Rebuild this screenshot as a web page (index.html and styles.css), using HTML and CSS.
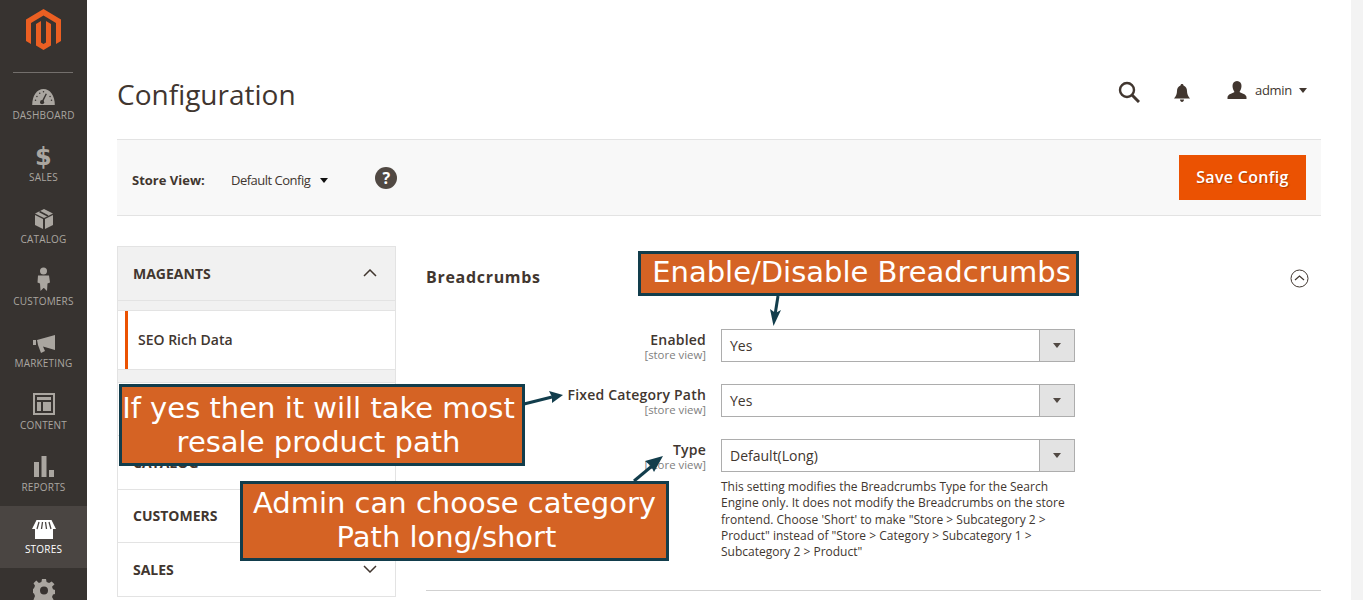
FILE: index.html
```html
<!DOCTYPE html>
<html lang="en">
<head>
<meta charset="utf-8">
<title>Configuration</title>
<link rel="stylesheet" href="styles.css">
</head>
<body>
<div class="app">
  <nav class="sidebar">
    <div class="logo">
      <svg width="36" height="42" viewBox="26 9 36 42"><path fill="#eb5f22" d="M43.500 9 61 19.500V41l-5 3V23L43.500 15.500 31 23v21l-5-3V19.500z"/><path fill="#eb5f22" d="M43.500 50 36 45.500V24l5-3v21.500l2.500 1.500 2.500-1.500V21l5 3v21.500z"/></svg>
    </div>
    <ul class="menu">
      <li class="menu-item">
        <svg class="menu-icon" width="23" height="16" viewBox="0 0 24 17"><path fill="#aaa6a0" fill-rule="evenodd" d="M0 17C0 7 5 0 12 0s12 7 12 17z"/><path stroke="#373330" stroke-width="1.500" d="M10 15 15 5"/><circle cx="10.500" cy="14" r="2.200" fill="#373330"/><g fill="#373330"><circle cx="5" cy="8" r=".8"/><circle cx="8" cy="4.500" r=".8"/><circle cx="12" cy="3" r=".8"/><circle cx="19" cy="8" r=".8"/><circle cx="20.500" cy="12" r=".8"/><circle cx="3.500" cy="12" r=".8"/></g></svg>
        <span>DASHBOARD</span>
      </li>
      <li class="menu-item">
        <span class="dollar">$</span>
        <span>SALES</span>
      </li>
      <li class="menu-item">
        <svg class="menu-icon" width="20" height="21" viewBox="0 0 20 21"><path fill="#aaa6a0" d="M10 1 19 5.500 10 10 1 5.500zM1 7l8 4v10l-8-4zM19 7v10l-8 4V11z"/><path stroke="#373330" stroke-width="1.500" d="M5.500 3.500 14 8"/></svg>
        <span>CATALOG</span>
      </li>
      <li class="menu-item">
        <svg class="menu-icon" width="13" height="24" viewBox="0 0 13 24"><circle cx="6.500" cy="4" r="3.500" fill="#aaa6a0"/><path fill="#aaa6a0" d="M1 8.500h11l1 7-2.500 1-.5 7.500-3-3-.5 0-3 3-.5-7.500-2.500-1z"/></svg>
        <span>CUSTOMERS</span>
      </li>
      <li class="menu-item">
        <svg class="menu-icon" width="22" height="18" viewBox="0 0 22 18"><path fill="#aaa6a0" d="M0 5h3v5H0zM4 5 22 0v15L10 11.500l2 4.500-4 2-3-8z"/></svg>
        <span>MARKETING</span>
      </li>
      <li class="menu-item">
        <svg class="menu-icon" width="22" height="22" viewBox="0 0 22 22"><path fill="#aaa6a0" fill-rule="evenodd" d="M0 0h22v22H0zM2 2v18h18V2z"/><path fill="#aaa6a0" d="M4 4h14v3H4zM4 9h4v9H4zM10 9h8v9h-8z"/></svg>
        <span>CONTENT</span>
      </li>
      <li class="menu-item">
        <svg class="menu-icon" width="20" height="21" viewBox="0 0 20 21"><path fill="#aaa6a0" d="M0 6h5v15H0zM7.500 0h5v21h-5zM15 14h5v7h-5z"/></svg>
        <span>REPORTS</span>
      </li>
      <li class="menu-item active">
        <svg class="menu-icon" width="24" height="19" viewBox="0 0 24 19"><path fill="#fff" d="M3 9h18v10H3zM4.500 0h15L24 9H0z"/><path stroke="#4a4542" stroke-width="1.300" d="M7 2 5 9M10.500 2 9.500 9M13.500 2 14.500 9M17 2l2 7"/></svg>
        <span>STORES</span>
      </li>
      <li class="menu-item">
        <svg class="menu-icon" width="22" height="22" viewBox="0 0 22 22"><path fill="#aaa6a0" fill-rule="evenodd" d="M9 0h4l.6 3 2.500 1 2.600-1.600 2.800 2.800L19 7.800l1 2.500 2 .7v4l-2 .6-1 2.500 1.600 2.600-2.800 2.800-2.600-1.700-2.500 1-.6 3H9l-.6-3-2.500-1-2.600 1.700-2.800-2.800L2 17.100 1 14.600 0 14v-4l1-.7 1-2.500L.5 4.200l2.800-2.800L5.900 4l2.500-1zM11 7.500a4 4 0 1 0 0 8 4 4 0 0 0 0-8z"/></svg>
      </li>
    </ul>
  </nav>

  <main class="main">
    <header class="page-head">
      <h1 class="page-title">Configuration</h1>
      <div class="head-actions">
        <svg class="search-icon" width="22" height="22" viewBox="0 0 22 22"><circle cx="9" cy="9" r="7" fill="none" stroke="#41362f" stroke-width="2.400"/><path stroke="#41362f" stroke-width="3" d="M14 14 21 21"/></svg>
        <svg class="bell-icon" width="16" height="18" viewBox="0 0 16 18"><path fill="#41362f" d="M8 0c1 0 1.500.7 1.500 1.500C12 2.500 13 4.500 13 7c0 3 1 5 3 7.500H0C2 12 3 10 3 7c0-2.500 1-4.500 3.500-5.500C6.500.7 7 0 8 0zM6 15.500h4c0 1.500-1 2.500-2 2.500s-2-1-2-2.500z"/></svg>
        <div class="user">
          <svg width="20" height="18" viewBox="0 0 20 18"><path fill="#41362f" d="M10 0c3 0 4.500 2.200 4.500 5S13 10 12.500 11c2 1.500 7 2 7 5.500V18H.5v-1.500c0-3.500 5-4 7-5.500C7 10 5.500 7.800 5.500 5S7 0 10 0z"/></svg>
          <span class="user-name">admin</span>
          <span class="caret"></span>
        </div>
      </div>
    </header>

    <section class="store-bar">
      <div class="store-scope">
        <span class="store-label">Store View:</span>
        <span class="store-value">Default Config</span>
        <span class="caret dark"></span>
        <span class="help">?</span>
      </div>
      <button class="save-btn">Save Config</button>
    </section>

    <div class="columns">
      <aside class="tabs">
        <div class="tab-head open"><span>MAGEANTS</span><svg width="14" height="8" viewBox="0 0 14 8"><path fill="none" stroke="#41362f" stroke-width="1.500" d="M1 7l6-6 6 6"/></svg></div>
        <div class="tab-open-gap"></div>
        <div class="tab-link">SEO Rich Data</div>
        <div class="tab-grey"></div>
        <div class="tab-head"></div>
        <div class="tab-head"><span>CATALOG</span></div>
        <div class="tab-head"><span>CUSTOMERS</span></div>
        <div class="tab-head"><span>SALES</span><svg width="14" height="8" viewBox="0 0 14 8"><path fill="none" stroke="#41362f" stroke-width="1.500" d="M1 1l6 6 6-6"/></svg></div>
      </aside>

      <section class="config">
        <div class="config-head">
          <h2 class="config-title">Breadcrumbs</h2>
          <svg class="collapse" width="19" height="19" viewBox="0 0 19 19"><circle cx="9.500" cy="9.500" r="8.500" fill="none" stroke="#41362f" stroke-width="1"/><path fill="none" stroke="#41362f" stroke-width="1.200" d="M5 11l4.500-4 4.500 4"/></svg>
        </div>
        <div class="form">
          <div class="row">
            <div class="label"><b>Enabled</b><small>[store view]</small></div>
            <div class="select"><span>Yes</span><i class="select-btn"><span class="caret small"></span></i></div>
          </div>
          <div class="row">
            <div class="label"><b>Fixed Category Path</b><small>[store view]</small></div>
            <div class="select"><span>Yes</span><i class="select-btn"><span class="caret small"></span></i></div>
          </div>
          <div class="row">
            <div class="label"><b>Type</b><small>[store view]</small></div>
            <div class="field">
              <div class="select"><span>Default(Long)</span><i class="select-btn"><span class="caret small"></span></i></div>
              <p class="note">This setting modifies the Breadcrumbs Type for the Search Engine only. It does not modify the Breadcrumbs on the store frontend. Choose 'Short' to make "Store &gt; Subcategory 2 &gt; Product" instead of "Store &gt; Category &gt; Subcategory 1 &gt; Subcategory 2 &gt; Product"</p>
            </div>
          </div>
        </div>
        <div class="config-rule"></div>
      </section>
    </div>
  </main>
  <div class="scroll-strip"></div>
</div>

<div class="callout callout-top">Enable/Disable Breadcrumbs</div>
<div class="callout callout-left">If yes then it will take most<br>resale product path</div>
<div class="callout callout-bottom">Admin can choose category<br><span class="callout-line">Path long/short</span></div>
<svg class="arrows" width="1363" height="600" viewBox="0 0 1363 600">
  <g stroke="#123d4c" stroke-width="3" fill="#123d4c">
    <path d="M778 296 775 315"/>
    <path stroke="none" d="M773.500 326 770 309 775.500 313 781 310z"/>
    <path d="M524 404 552 397"/>
    <path stroke="none" d="M563 395 549 391 552 397 552 403z"/>
    <path d="M634 481 652 466"/>
    <path stroke="none" d="M663 456 645 461 651 466 654 472z"/>
  </g>
</svg>
</body>
</html>
```
FILE: styles.css
```css
* { box-sizing: border-box; }
html, body { margin: 0; padding: 0; height: 600px; overflow: hidden; background: #fff; }
body { font-family: "Open Sans", sans-serif; color: #41362f; font-size: 14px; position: relative; }
.app { display: flex; width: 1363px; height: 600px; overflow: hidden; }

.sidebar { width: 87px; flex: none; background: #373330; height: 600px; overflow: hidden; }
.logo { height: 73px; margin: 0 14px 0 13px; padding: 9px 0 0 13px; border-bottom: 1px solid #736f6c; }
.logo svg { display: block; }
.menu { list-style: none; margin: 0; padding: 0; }
.menu-item { height: 62px; display: flex; flex-direction: column; align-items: center; justify-content: flex-end; padding-bottom: 12px; color: #aaa6a0; font-size: 10px; letter-spacing: .2px; line-height: 14px; gap: 3px; }
.menu > .menu-item:first-child { height: 61px; }
.menu-item.active { background: #4a4542; color: #fff; }
.menu-item:last-child { justify-content: flex-start; padding-top: 11px; }
.menu-icon { display: block; flex: none; }
.dollar { font-size: 24px; line-height: 24px; font-weight: 700; font-family: "DejaVu Sans", sans-serif; margin-bottom: -2px; }

.main { flex: 1; min-width: 0; padding: 0 30px; }
.page-head { height: 140px; display: flex; justify-content: space-between; padding-top: 75px; border-bottom: 1px solid #e3e3e3; }
.page-title { margin: 0; font-size: 28px; font-weight: 400; line-height: 38px; color: #41362f; }
.head-actions { display: flex; align-items: flex-start; padding-top: 5px; height: 30px; }
.search-icon { margin-right: 34px; margin-top: 1px; }
.bell-icon { margin-right: 37px; margin-top: 4px; }
.user { display: flex; align-items: center; margin-right: 14px; height: 20px; }
.user-name { font-size: 13px; letter-spacing: -.3px; line-height: 20px; margin: 0 7px 0 8px; }
.caret { display: inline-block; width: 0; height: 0; border-left: 4.500px solid transparent; border-right: 4.500px solid transparent; border-top: 5px solid #41362f; }
.caret.dark { border-top-color: #111; margin-left: 10px; }
.caret.small { border-top-color: #514943; }

.store-bar { height: 76px; background: #f8f8f8; border-bottom: 1px solid #e3e3e3; display: flex; align-items: center; justify-content: space-between; padding: 0 15px; }
.store-scope { display: flex; align-items: center; margin-top: 5px; }
.store-label { font-size: 13px; font-weight: 700; width: 99px; }
.store-value { font-size: 13px; letter-spacing: -.5px; }
.help { width: 22px; height: 22px; border-radius: 50%; background: #514943; color: #fff; font-weight: 700; font-size: 16px; line-height: 22px; text-align: center; margin-left: 47px; margin-top: -4px; }
.save-btn { width: 127px; height: 45px; border: 0; background: #eb5202; color: #fff; font: 600 16px "Open Sans", sans-serif; letter-spacing: .3px; text-shadow: 1px 1px 1px rgba(0,0,0,.25); padding: 0 0 2px; }

.columns { display: flex; padding-top: 30px; }
.tabs { width: 279px; flex: none; border-left: 1px solid #e3e3e3; border-right: 1px solid #e3e3e3; }
.tab-head { height: 53.500px; display: flex; align-items: center; justify-content: space-between; padding: 0 18px 0 15px; border-bottom: 1px solid #e3e3e3; font-size: 14px; font-weight: 700; color: #41362f; }
.tab-head.open { height: 54.500px; background: #f1f1f1; border-top: 1px solid #e3e3e3; }
.tab-open-gap { height: 10px; background: #f1f1f1; border-bottom: 1px solid #e3e3e3; }
.tab-link { height: 58px; margin-left: 7px; padding-left: 10px; border-left: 3px solid #eb5202; display: flex; align-items: center; font-size: 14px; font-weight: 600; color: #41362f; }
.tab-grey { height: 14px; background: #f1f1f1; border-top: 1px solid #e3e3e3; border-bottom: 1px solid #e3e3e3; }

.config { flex: 1; margin-left: 30px; min-width: 0; }
.config-head { height: 83px; display: flex; justify-content: space-between; align-items: flex-start; padding: 20px 12px 0 0; }
.config-title { margin: 0; font-size: 16px; line-height: 22px; font-weight: 700; letter-spacing: .7px; color: #41362f; }
.collapse { margin-top: 3px; margin-right: .5px; }
.form { width: 649px; }
.row { display: flex; align-items: flex-start; gap: 15px; margin-bottom: 22px; }
.label { width: 280px; flex: none; text-align: right; padding-top: 2px; }
.label b { display: block; font-size: 14px; line-height: 18px; font-weight: 600; letter-spacing: .2px; color: #41362f; }
.label small { display: block; font-size: 11.400px; line-height: 12px; color: #808080; }
.field { width: 354px; flex: none; }
.select { width: 354px; height: 33px; border: 1px solid #adadad; display: flex; align-items: center; justify-content: space-between; padding-left: 8px; font-size: 14px; color: #41362f; background: #fff; }
.select-btn { width: 35px; height: 31px; background: #e3e3e3; border-left: 1px solid #adadad; display: flex; align-items: center; justify-content: center; }
.note { margin: 7px 0 0; font-size: 12px; line-height: 16.300px; color: #41362f; }
.row:last-child { margin-bottom: 0; }
.config-rule { border-top: 1px solid #d1d1d1; margin-top: 30px; }
.scroll-strip { width: 12px; flex: none; background: #f3f3f3; }

.callout { position: absolute; background: #d56324; border: 3px solid #123d4c; color: #fff; font-family: "DejaVu Sans", sans-serif; font-size: 29px; line-height: 34px; text-align: center; }
.callout-top { left: 638px; top: 251px; width: 441px; height: 45px; line-height: 37px; padding-left: 6px; }
.callout-left { left: 119px; top: 384px; width: 406px; height: 82px; padding: 4px 7px 0 0; }
.callout-bottom { left: 240px; top: 481px; width: 429px; height: 80px; padding-top: 2px; }
.callout-line { margin-right: 16px; }
.arrows { position: absolute; left: 0; top: 0; pointer-events: none; }
```
